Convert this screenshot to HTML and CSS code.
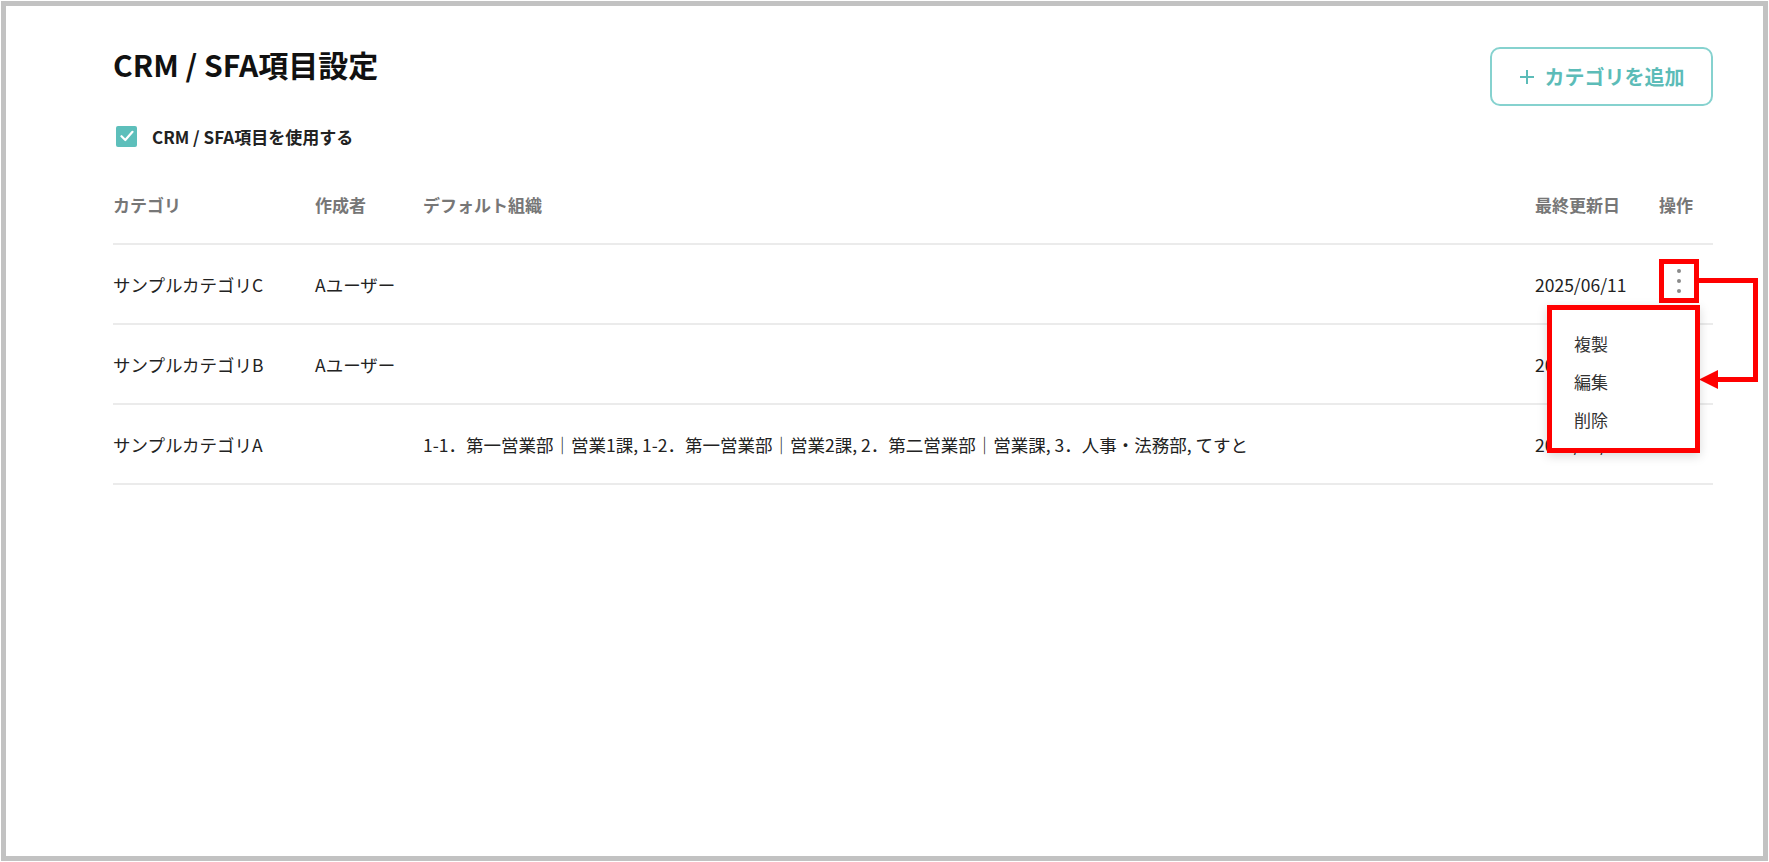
FILE: index.html
```html
<!DOCTYPE html>
<html lang="ja">
  <head>
    <meta charset="UTF-8" />
    <meta name="viewport" content="width=device-width, initial-scale=1.0" />
    <title>CRM / SFA項目設定</title>
    <link rel="stylesheet" href="styles.css">
  </head>
  <body>
    <div class="frame">
      <div class="page">
        <!-- ヘッダー -->
        <div class="head">
          <h1 class="title">CRM / SFA項目設定</h1>
          <button class="btn-add">
            <svg width="16" height="16" viewBox="0 0 16 16"><path d="M8 1 V15 M1 8 H15" stroke="#5cbcb8" stroke-width="2" /></svg>
            カテゴリを追加
          </button>
        </div>

        <label class="check-row">
          <span class="checkbox">
            <svg width="14" height="12" viewBox="0 0 14 12"><path d="M1.5 6.2 L5.3 10 L12.5 1.8" fill="none" stroke="#fff" stroke-width="2.2" stroke-linecap="round" stroke-linejoin="round"/></svg>
          </span>
          CRM / SFA項目を使用する
        </label>

        <!-- 一覧 -->
        <table class="table">
          <colgroup>
            <col class="c-cat" />
            <col class="c-user" />
            <col />
            <col class="c-date" />
            <col class="c-ops" />
          </colgroup>
          <thead>
            <tr>
              <th>カテゴリ</th>
              <th>作成者</th>
              <th>デフォルト組織</th>
              <th>最終更新日</th>
              <th>操作</th>
            </tr>
          </thead>
          <tbody>
            <tr>
              <td>サンプルカテゴリC</td>
              <td>Aユーザー</td>
              <td></td>
              <td>2025/06/11</td>
              <td>
                <div class="ops">
                  <button class="kebab"><span></span><span></span><span></span></button>
                  <ul class="menu">
                    <li>複製</li>
                    <li>編集</li>
                    <li>削除</li>
                  </ul>
                  <svg class="arrow" width="70" height="124" viewBox="0 0 70 124">
                    <path d="M8 11.5 H64.5 V110.5 H25" fill="none" stroke="#f00" stroke-width="5" />
                    <polygon points="8,110.5 27,101 27,120" fill="#f00" />
                  </svg>
                </div>
              </td>
            </tr>
            <tr>
              <td>サンプルカテゴリB</td>
              <td>Aユーザー</td>
              <td></td>
              <td>2025/06/11</td>
              <td></td>
            </tr>
            <tr>
              <td>サンプルカテゴリA</td>
              <td></td>
              <td>1-1．第一営業部｜営業1課, 1-2．第一営業部｜営業2課, 2．第二営業部｜営業課, 3．人事・法務部, てすと</td>
              <td>2025/06/11</td>
              <td></td>
            </tr>
          </tbody>
        </table>
      </div>
    </div>
  </body>
</html>
```

FILE: styles.css
```css
* {
    margin: 0;
    padding: 0;
    box-sizing: border-box;
}

body {
    background: #fff;
    font-family: "Noto Sans CJK JP", "Noto Sans", sans-serif;
    color: #222;
}

.frame {
    margin: 1px;
    height: 860px;
    border: 5px solid #c2c2c2;
    background: #fff;
}

.page {
    padding: 41px 50px 0 107px;
}

.head {
    display: flex;
    justify-content: space-between;
    align-items: flex-start;
}

.title {
    margin-top: 3px;
    font-size: 30px;
    line-height: 28px;
    font-weight: bold;
    color: #111;
}

.btn-add {
    width: 223px;
    height: 59px;
    border: 2px solid #86d2cf;
    border-radius: 10px;
    background: #fff;
    color: #5cbcb8;
    font-family: inherit;
    font-size: 20px;
    font-weight: bold;
    display: flex;
    align-items: center;
    justify-content: center;
    gap: 10px;
    cursor: pointer;
}

.check-row {
    margin-top: 15px;
    height: 30px;
    display: flex;
    align-items: center;
    gap: 15px;
    font-size: 17px;
    font-weight: bold;
    color: #222;
}

.checkbox {
    margin-left: 3px;
    width: 21px;
    height: 21px;
    border-radius: 2px;
    background: #5dbfbb;
    display: flex;
    align-items: center;
    justify-content: center;
}

.table {
    margin-top: 15px;
    width: 100%;
    border-collapse: collapse;
    table-layout: fixed;
}

.c-cat {
    width: 202px;
}

.c-user {
    width: 108px;
}

.c-date {
    width: 124px;
}

.c-ops {
    width: 54px;
}

th,
td {
    height: 80px;
    padding: 0;
    text-align: left;
    vertical-align: middle;
    font-size: 17.5px;
    border-bottom: 2px solid #ebebeb;
    white-space: nowrap;
}

th {
    height: 78px;
    font-size: 17px;
    color: #777;
    font-weight: bold;
}

td {
    color: #222;
}

.ops {
    position: relative;
    width: 40px;
}

.kebab {
    width: 40px;
    height: 44px;
    margin-bottom: 6px;
    border: 5px solid #f00;
    background: #fff;
    display: flex;
    flex-direction: column;
    align-items: center;
    justify-content: center;
    gap: 6px;
    cursor: pointer;
}

.kebab span {
    width: 4px;
    height: 4px;
    border-radius: 50%;
    background: #8a8a8a;
}

.menu {
    position: absolute;
    left: -112px;
    top: 46px;
    width: 153px;
    height: 148px;
    list-style: none;
    background: #fff;
    border: 5px solid #f00;
    box-shadow: 0 3px 10px rgba(0, 0, 0, 0.15);
    padding: 15px 0 8px;
    z-index: 2;
}

.menu li {
    padding: 0 22px;
    line-height: 38px;
    font-size: 17px;
    color: #333;
}

.arrow {
    position: absolute;
    left: 32px;
    top: 10px;
}
```
